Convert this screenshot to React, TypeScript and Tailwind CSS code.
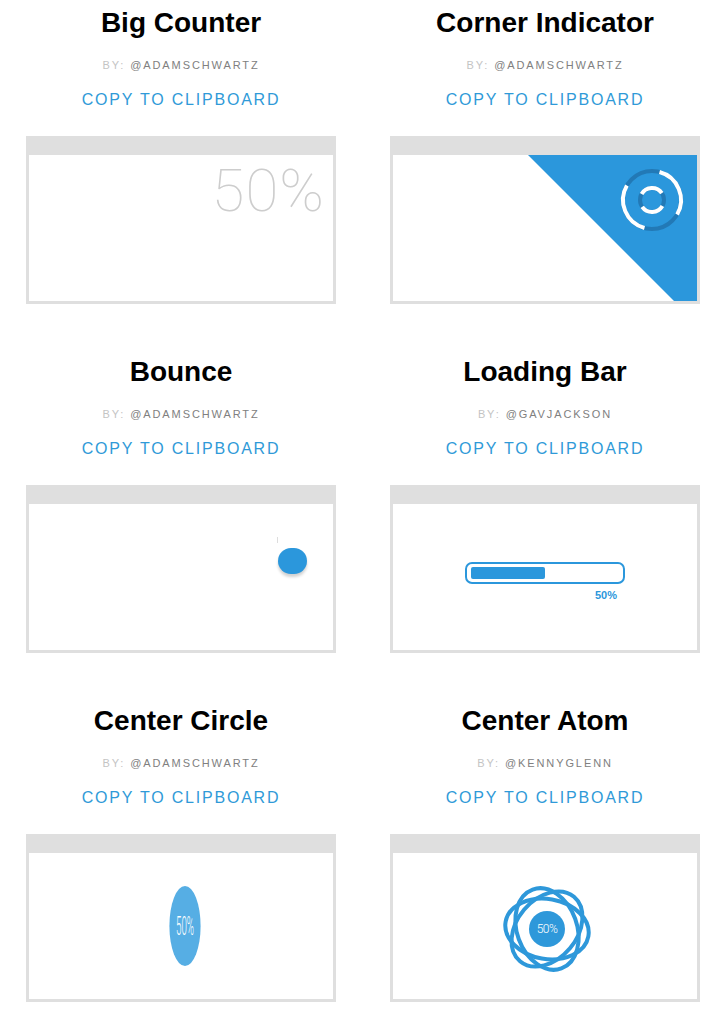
import React from "react";

const BLUE = "#2b97dc";

function arc(cx: number, cy: number, r: number, a0: number, a1: number) {
  const rad = (a: number) => (a * Math.PI) / 180;
  const x0 = cx + r * Math.cos(rad(a0));
  const y0 = cy + r * Math.sin(rad(a0));
  const x1 = cx + r * Math.cos(rad(a1));
  const y1 = cy + r * Math.sin(rad(a1));
  const large = a1 - a0 > 180 ? 1 : 0;
  return `M ${x0} ${y0} A ${r} ${r} 0 ${large} 1 ${x1} ${y1}`;
}

const BigCounter = () => (
  <div className="flex h-full justify-end pr-[8px]">
    <span className="font-['Roboto',sans-serif] text-[60px] font-thin leading-[72px] tracking-[1px] text-[#cdcdcd]">
      50%
    </span>
  </div>
);

const CornerIndicator = () => (
  <svg width="304" height="146" viewBox="0 0 304 146" className="block">
    <polygon points="135,0 304,0 304,169" fill={BLUE} />
    <circle cx="259" cy="45" r="29" fill="none" stroke="#2279b6" strokeWidth="4" />
    <circle cx="259" cy="45" r="12" fill="none" stroke="#2279b6" strokeWidth="4" />
    <path d={arc(259, 45, 29, -75, 30)} fill="none" stroke="#fff" strokeWidth="4" />
    <path d={arc(259, 45, 29, 105, 210)} fill="none" stroke="#fff" strokeWidth="4" />
    <path d={arc(259, 45, 12, -150, -35)} fill="none" stroke="#fff" strokeWidth="4" />
    <path d={arc(259, 45, 12, 30, 145)} fill="none" stroke="#fff" strokeWidth="4" />
  </svg>
);

const Bounce = () => (
  <div className="relative h-full">
    <div className="absolute left-[248px] top-[33px] h-[6px] w-px bg-[#dddddd]"></div>
    <div className="absolute left-[249px] top-[44px] h-[26px] w-[29px] rounded-full bg-[#2b97dc] shadow-[0_3px_3px_rgba(0,0,0,0.18)]"></div>
  </div>
);

const LoadingBar = () => (
  <div className="flex h-full flex-col items-center pt-[58px]">
    <div className="h-[22px] w-[160px] rounded-[7px] border-2 border-[#2b97dc] px-[4px] py-[3px]">
      <div className="h-full w-1/2 rounded-[2px] bg-[#2b97dc]"></div>
    </div>
    <div className="mt-[4px] w-[160px] pr-[8px] text-right text-[11px] font-bold leading-[14px] text-[#2b97dc]">
      50%
    </div>
  </div>
);

const CenterCircle = () => (
  <div className="flex h-full items-center justify-center pl-[7px]">
    <div className="flex h-[80px] w-[80px] scale-x-[0.39] items-center justify-center rounded-full bg-[#56aee4]">
      <span className="font-['Roboto',sans-serif] text-[25px] font-light leading-none text-white">50%</span>
    </div>
  </div>
);

const CenterAtom = () => (
  <div className="flex h-full items-center justify-center pl-[4px] pt-[6px]">
    <svg width="100" height="100" viewBox="-50 -50 100 100" className="block">
      {[0, 60, 120].map((deg) => (
        <ellipse
          key={deg}
          cx="0"
          cy="0"
          rx="42"
          ry="30"
          fill="none"
          stroke="#2e98da"
          strokeWidth="4"
          transform={`rotate(${deg + 10})`}
        />
      ))}
      <circle cx="0" cy="0" r="18" fill="#2e98da" />
      <text
        x="0"
        y="4"
        textAnchor="middle"
        fill="#fff"
        fontSize="12"
        fontWeight="300"
        fontFamily="Roboto, sans-serif"
        letterSpacing="-0.5"
      >
        50%
      </text>
    </svg>
  </div>
);

const cards = [
  { title: "Big Counter", author: "@ADAMSCHWARTZ", preview: <BigCounter /> },
  { title: "Corner Indicator", author: "@ADAMSCHWARTZ", preview: <CornerIndicator /> },
  { title: "Bounce", author: "@ADAMSCHWARTZ", preview: <Bounce /> },
  { title: "Loading Bar", author: "@GAVJACKSON", preview: <LoadingBar /> },
  { title: "Center Circle", author: "@ADAMSCHWARTZ", preview: <CenterCircle /> },
  { title: "Center Atom", author: "@KENNYGLENN", preview: <CenterAtom /> },
];

export default function App() {
  return (
    <div className="min-h-[1010px] w-[714px] bg-white pl-[26px] pt-[6px] font-['Liberation_Sans',Arial,sans-serif]">
      <div className="grid grid-cols-[310px_310px] gap-x-[54px] gap-y-[51px]">
        {cards.map((card) => (
          <div key={card.title} className="flex flex-col items-center">
            <h2 className="text-[28px] font-bold leading-[34px] text-black">{card.title}</h2>
            <p className="mt-[18px] text-[11px] leading-[14px] tracking-[1.9px] text-[#808080]">
              <span className="text-[#c4c4c4]">BY:</span> {card.author}
            </p>
            <a className="mt-[18px] cursor-pointer text-[16px] leading-[20px] tracking-[1.8px] text-[#2f9ad8]">
              COPY TO CLIPBOARD
            </a>
            <div className="mt-[26px] w-[310px] border-[3px] border-[#dfdfdf]">
              <div className="h-[16px] bg-[#dfdfdf]"></div>
              <div className="h-[146px] overflow-hidden bg-white">{card.preview}</div>
            </div>
          </div>
        ))}
      </div>
    </div>
  );
}
